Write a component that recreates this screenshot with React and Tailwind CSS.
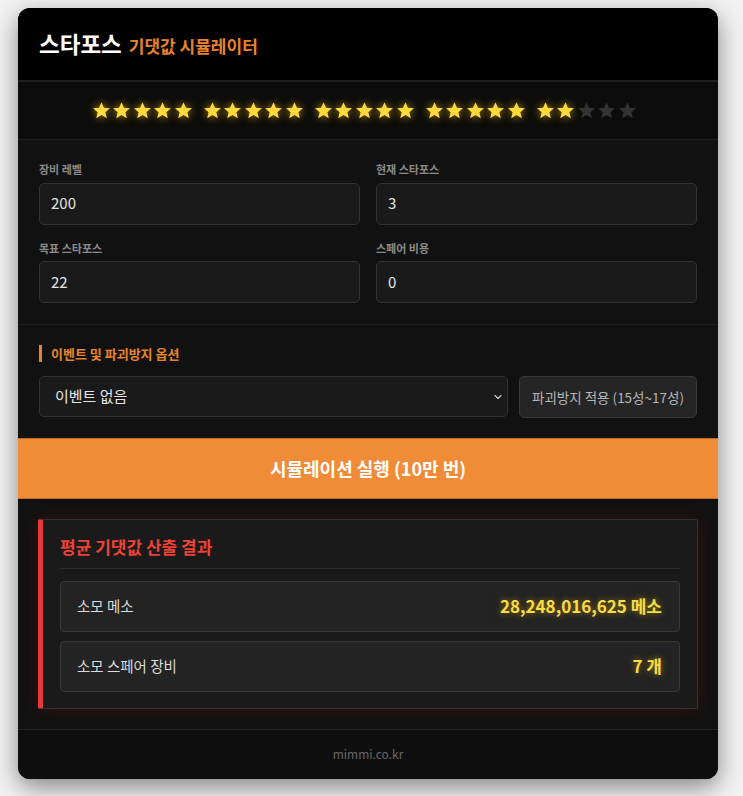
import { ChevronDown } from "lucide-react"

const font = { fontFamily: '"Noto Sans CJK KR", "Noto Sans", sans-serif' }

const Star = ({ on }) => (
  <svg
    viewBox="0 0 24 24"
    className={
      on
        ? "w-[19px] h-[19px] fill-[#ffd93d] drop-shadow-[0_0_4px_rgba(255,200,0,0.7)]"
        : "w-[19px] h-[19px] fill-[#333333]"
    }
  >
    <path d="M12 1.5l3.1 7.1 7.6.6-5.8 5 1.8 7.5L12 17.7l-6.7 4 1.8-7.5-5.8-5 7.6-.6z" />
  </svg>
)

const Field = ({ label, value }) => (
  <div className="flex flex-col">
    <label className="text-[11px] font-bold text-[#8a8a8a] mb-[5px]">{label}</label>
    <div className="h-[42px] flex items-center px-[11px] bg-[#1a1a1a] border border-[#333] rounded-[5px] text-[15px] text-[#e5e5e5]">
      {value}
    </div>
  </div>
)

const ResultRow = ({ label, value }) => (
  <div className="h-[51px] flex items-center justify-between pl-[16px] pr-[17px] bg-[#232323] border border-[#383838] rounded-[4px]">
    <span className="text-[14.5px] text-[#dcdcdc]">{label}</span>
    <span className="text-[17px] font-bold text-[#f7dc45] [text-shadow:0_0_6px_rgba(255,200,0,0.55)]">{value}</span>
  </div>
)

export default function App() {
  const filled = 22
  const groups = [0, 1, 2, 3, 4]
  return (
    <div style={font} className="min-h-[796px] bg-[#f2f2f2] pt-[8px] pl-[18px]">
      <div className="w-[700px] rounded-[12px] overflow-hidden bg-[#111111] shadow-[0_8px_24px_rgba(0,0,0,0.45)]">
        <header className="h-[74px] bg-black flex items-center px-[21px] border-b-2 border-[#1f1f1f]">
          <h1 className="flex items-baseline gap-[7px]">
            <span className="text-[22.5px] font-bold text-white">스타포스</span>
            <span className="text-[17px] font-bold text-[#e8842c]">기댓값 시뮬레이터</span>
          </h1>
        </header>

        <div className="h-[58px] bg-[#0c0c0c] border-b border-[#1f1f1f] flex items-center justify-center gap-[10px] pr-[8px]">
          {groups.map((g) => (
            <div key={g} className="flex gap-[1.5px]">
              {[0, 1, 2, 3, 4].map((i) => (
                <Star key={i} on={g * 5 + i < filled} />
              ))}
            </div>
          ))}
        </div>

        <div className="px-[21px] pt-[21px] pb-[21px] grid grid-cols-2 gap-x-[16px] gap-y-[15px] border-b border-[#1c1c1c]">
          <Field label="장비 레벨" value="200" />
          <Field label="현재 스타포스" value="3" />
          <Field label="목표 스타포스" value="22" />
          <Field label="스페어 비용" value="0" />
        </div>

        <div className="px-[21px] pt-[20px] pb-[20px]">
          <div className="border-l-[3px] border-[#e8842c] pl-[9px] text-[13px] font-bold text-[#e8842c] leading-[17px]">
            이벤트 및 파괴방지 옵션
          </div>
          <div className="flex gap-[11px] mt-[14px]">
            <div className="flex-1 h-[41px] flex items-center justify-between pl-[15px] pr-[3px] bg-[#1a1a1a] border border-[#333] rounded-[5px]">
              <span className="text-[15px] text-[#e5e5e5]">이벤트 없음</span>
              <ChevronDown className="w-[12px] h-[12px] text-[#cfcfcf]" strokeWidth={2.2} />
            </div>
            <button className="w-[178px] h-[42px] bg-[#252525] border border-[#383838] rounded-[5px] text-[13.5px] text-[#b5b5b5]">
              파괴방지 적용 (15성~17성)
            </button>
          </div>
        </div>

        <button className="w-full h-[61px] bg-[#f08b38] border-y border-[#c26a24] text-[18px] font-bold text-white">
          시뮬레이션 실행 (10만 번)
        </button>

        <div className="p-[20px]">
          <div className="bg-[#1a1a1a] border border-[#333] border-l-[5px] border-l-[#e53935] rounded-[2px] px-[17px] pt-[14px] pb-[16px] shadow-[0_0_18px_rgba(200,40,30,0.18)]">
            <h2 className="text-[17px] font-bold text-[#ef4136] pb-[8px] border-b border-[#2c2c2c]">
              평균 기댓값 산출 결과
            </h2>
            <div className="flex flex-col gap-[9px] mt-[12px]">
              <ResultRow label="소모 메소" value="28,248,016,625 메소" />
              <ResultRow label="소모 스페어 장비" value="7 개" />
            </div>
          </div>
        </div>

        <footer className="h-[50px] bg-[#0e0e0e] border-t border-[#262626] flex items-center justify-center text-[12px] text-[#666]">
          mimmi.co.kr
        </footer>
      </div>
    </div>
  )
}
